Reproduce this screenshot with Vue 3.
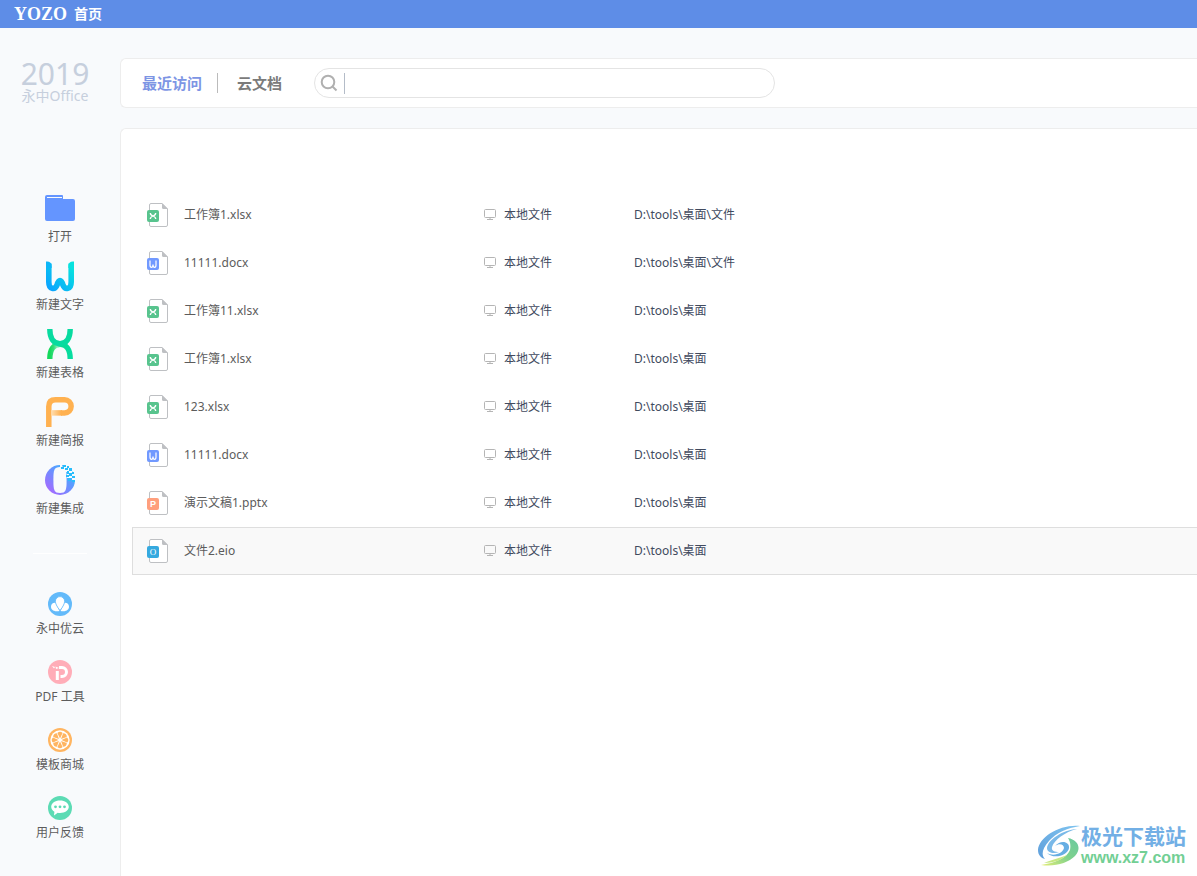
<script setup>
import { ref } from 'vue'

const query = ref('')

const createItems = [
  { id: 'open', label: '打开' },
  { id: 'word', label: '新建文字' },
  { id: 'sheet', label: '新建表格' },
  { id: 'slide', label: '新建简报' },
  { id: 'suite', label: '新建集成' }
]

const serviceItems = [
  { id: 'cloud', label: '永中优云' },
  { id: 'pdf', label: 'PDF 工具' },
  { id: 'store', label: '模板商城' },
  { id: 'feedback', label: '用户反馈' }
]

const files = [
  { name: '工作簿1.xlsx', type: 'x', path: 'D:\\tools\\桌面\\文件' },
  { name: '11111.docx', type: 'w', path: 'D:\\tools\\桌面\\文件' },
  { name: '工作簿11.xlsx', type: 'x', path: 'D:\\tools\\桌面' },
  { name: '工作簿1.xlsx', type: 'x', path: 'D:\\tools\\桌面' },
  { name: '123.xlsx', type: 'x', path: 'D:\\tools\\桌面' },
  { name: '11111.docx', type: 'w', path: 'D:\\tools\\桌面' },
  { name: '演示文稿1.pptx', type: 'p', path: 'D:\\tools\\桌面' },
  { name: '文件2.eio', type: 'o', path: 'D:\\tools\\桌面', active: true }
]

const slices = [0, 45, 90, 135, 180, 225, 270, 315]
</script>

<template>
  <div class="app">
    <header class="topbar">
      <span class="logo">YOZO</span>
      <span class="home">首页</span>
    </header>

    <div class="layout">
      <aside class="sidebar">
        <div class="brand">
          <span class="year">2019</span>
          <span class="product">永中Office</span>
        </div>

        <nav class="group create">
          <button v-for="item in createItems" :key="item.id" type="button" class="item">
            <svg class="big" viewBox="0 0 32 32" aria-hidden="true">
              <template v-if="item.id === 'open'">
                <path d="M3 2h15q1 0 1 1v3h10q2 0 2 2v18q0 2-2 2H3q-2 0-2-2V4q0-2 2-2z" fill="#6495ff" />
                <rect x="3" y="4" width="15" height="1" fill="#f8fafc" />
              </template>
              <template v-else-if="item.id === 'word'">
                <linearGradient id="gw" x1="0" y1="1" x2="1" y2="0">
                  <stop offset="0" stop-color="#0aa4ff" />
                  <stop offset=".5" stop-color="#08c3ef" />
                  <stop offset="1" stop-color="#08e6dc" />
                </linearGradient>
                <path d="M4.8 2.5V21C4.8 28.8 11 29 13 24.2C14.6 18 17.4 18 19 24.2C21 29 27.2 28.8 27.2 21V2.5" fill="none" stroke="url(#gw)" stroke-width="5.6" />
                <path d="M2 3V0.500Q7.600 0 7.600 5V7L2 7z" fill="#0cb6f8" />
                <path d="M30 3V0.500Q24.400 0 24.400 5V7L30 7z" fill="#08e2de" />
              </template>
              <template v-else-if="item.id === 'sheet'">
                <linearGradient id="gx" x1="0" y1="0" x2="1" y2="0">
                  <stop offset="0" stop-color="#14d85b" />
                  <stop offset=".2" stop-color="#34df7c" />
                  <stop offset=".35" stop-color="#84ecb2" />
                  <stop offset=".55" stop-color="#0bd993" />
                  <stop offset="1" stop-color="#07dda0" />
                </linearGradient>
                <path d="M5.8 30C5.8 20 10 15.2 16 15.2C22 15.2 26.2 20 26.2 30" fill="none" stroke="url(#gx)" stroke-width="5.4" />
                <path d="M5.8 0C5.8 10 10 14.6 16 14.6C22 14.6 26.2 10 26.2 0" fill="none" stroke="#08dba0" stroke-width="5.4" />
              </template>
              <template v-else-if="item.id === 'slide'">
                <linearGradient id="gp" gradientUnits="userSpaceOnUse" x1="7" y1="0" x2="17" y2="0">
                  <stop offset="0" stop-color="#ffe0b5" />
                  <stop offset="1" stop-color="#ffb150" />
                </linearGradient>
                <path d="M4.8 30V9.5Q4.8 2.8 11.5 2.8H20.6A6.55 6.55 0 0 1 20.6 15.9H17" fill="none" stroke="#ffb150" stroke-width="5.5" />
                <path d="M7.500 15.900H18" fill="none" stroke="url(#gp)" stroke-width="5.500" />
              </template>
              <template v-else>
                <linearGradient id="go" x1="0" y1="1" x2="1" y2="0">
                  <stop offset="0" stop-color="#b760ff" />
                  <stop offset=".5" stop-color="#6d8eff" />
                  <stop offset="1" stop-color="#24c7ff" />
                </linearGradient>
                <circle cx="16" cy="15" r="15" fill="url(#go)" />
                <path d="M16 2C22 2 22.6 5 22.6 15S22 28 16 28S9.4 25 9.4 15S10 2 16 2z" fill="#f8fafc" />
                <path d="M16 0h2v2h-2zM20 0h12v6h-4v3h3v7h-3v-3h-5V7h-3V2h-2z" fill="#f8fafc" />
                <path d="M19 0h3v2h-3zM17 2h3v2h-3zM23 1h2v2h-2zM21 3h3v2h-3zM25 3h3v3h-3zM23 6h2v3h-2zM28 7h2v2h-2zM25 8h3v3h-3zM22 10h3v2h-3zM28 11h3v2h-3zM24 13h3v3h-3zM28 15h3v2h-3z" fill="#28bdfc" />
              </template>
            </svg>
            <span>{{ item.label }}</span>
          </button>
        </nav>

        <hr class="divider" />

        <nav class="group services">
          <button v-for="item in serviceItems" :key="item.id" type="button" class="item">
            <svg class="small" viewBox="0 0 24 24" aria-hidden="true">
              <template v-if="item.id === 'cloud'">
                <circle cx="12" cy="12" r="12" fill="#63bafa" />
                <path d="M11.500 19C5.500 20.200 3 17.500 3 14.800C3 12 5 10.500 7.500 10.800C9 13.500 10 16.500 11.500 19z" fill="#fff" />
                <path d="M12.500 19C18.500 20.200 21 17.500 21 14.800C21 12 19 10.500 16.500 10.800C15 13.500 14 16.500 12.500 19z" fill="#fff" />
                <path d="M12 18.500C8.500 14 7.400 11.500 7.400 9.200a4.600 4.600 0 0 1 9.200 0c0 2.300-1.100 4.800-4.600 9.300z" fill="#fff" stroke="#63bafa" stroke-width=".8" />
              </template>
              <template v-else-if="item.id === 'pdf'">
                <circle cx="12" cy="12" r="12" fill="#ffadb8" />
                <path d="M9.300 20V11M11 7.500H14a4.500 4.500 0 0 1 0 9h-1.500" fill="none" stroke="#fff" stroke-width="3" />
                <path d="M4 6l3 1-1 1.500zM7.500 6.500L11 8 8 9z" fill="#fff" />
              </template>
              <template v-else-if="item.id === 'store'">
                <circle cx="12" cy="12" r="12" fill="#ffb561" />
                <circle cx="12" cy="12" r="9.700" fill="#fff" />
                <path v-for="a in slices" :key="a" d="M12 10.500L9.400 5Q12 2.400 14.600 5z" fill="#ffb561" :transform="`rotate(${a} 12 12)`" />
              </template>
              <template v-else>
                <circle cx="12" cy="12" r="12" fill="#5cdbb4" />
                <path d="M12 4.500c5 0 8.800 2.700 8.800 6.300S17 17 12 17c-1 0-1.500 0-2.300-.2L6 19.500l.4-3.800C4.400 14.600 3.200 12.900 3.200 10.800c0-3.600 3.800-6.300 8.800-6.300z" fill="#fff" />
                <g fill="#5cdbb4"><circle cx="7.500" cy="10.800" r="1.400" /><circle cx="12" cy="10.800" r="1.400" /><circle cx="16.500" cy="10.800" r="1.400" /></g>
              </template>
            </svg>
            <span>{{ item.label }}</span>
          </button>
        </nav>
      </aside>

      <main class="content">
        <section class="toolbar">
          <button type="button" class="tab current">最近访问</button>
          <span class="bar"></span>
          <button type="button" class="tab">云文档</button>
          <label class="search">
            <svg viewBox="0 0 18 18" aria-hidden="true">
              <circle cx="8" cy="8" r="6.300" />
              <path d="M12.500 12.500L16.500 16.500" />
            </svg>
            <input v-model="query" type="text" aria-label="搜索" />
          </label>
        </section>

        <section class="panel">
          <table class="files">
            <tbody>
              <tr v-for="(file, i) in files" :key="i" :class="{ active: file.active }">
                <td class="kind">
                  <svg class="doc" viewBox="0 0 22 24" aria-hidden="true">
                    <path d="M15 .5H4Q2.500.5 2.500 2V22Q2.500 23.500 4 23.500H19Q20.500 23.500 20.500 22V6z" fill="#fff" stroke="#bec0c3" />
                    <path d="M15 0v4.500Q15 6 16.500 6H21z" fill="#bec0c3" />
                    <template v-if="file.type === 'x'">
                      <rect y="7" width="12" height="12" rx="2" fill="#58c48e" />
                      <path d="M3.300 10C3.300 14 8.700 12 8.700 16M8.700 10C8.700 14 3.300 12 3.300 16" fill="none" stroke="#fff" stroke-width="1.300" />
                    </template>
                    <template v-else-if="file.type === 'w'">
                      <rect y="7" width="12" height="12" rx="2" fill="#7199ff" />
                      <path d="M3 9.500V14Q3 16.300 4.500 16.300T6 13.500Q6 16.300 7.500 16.300T9 14V9.500" fill="none" stroke="#fff" stroke-width="1.200" />
                    </template>
                    <template v-else-if="file.type === 'p'">
                      <rect y="7" width="12" height="12" rx="2" fill="#ff9f7d" />
                      <text x="6" y="16" class="mark">P</text>
                    </template>
                    <template v-else>
                      <rect y="7" width="12" height="12" rx="2" fill="#35a9df" />
                      <text x="6" y="16" class="mark serif">O</text>
                    </template>
                  </svg>
                </td>
                <td class="name">{{ file.name }}</td>
                <td class="place">
                  <span class="place-in">
                    <svg viewBox="0 0 12 12" aria-hidden="true">
                      <rect x=".5" y=".5" width="11" height="8" rx="1" />
                      <path d="M6 8.500V10M3 10.500H9" />
                    </svg>
                    本地文件
                  </span>
                </td>
                <td class="path">{{ file.path }}</td>
              </tr>
            </tbody>
          </table>
        </section>
      </main>
    </div>

    <div class="watermark">
      <svg viewBox="0 0 44 42" aria-hidden="true">
        <linearGradient id="s1" x1="1" y1="0" x2="0" y2="1">
          <stop offset="0" stop-color="#7fc4f0" />
          <stop offset="1" stop-color="#5f9fdb" />
        </linearGradient>
        <linearGradient id="s2" x1="1" y1="0" x2="0" y2="1">
          <stop offset="0" stop-color="#69c9a0" />
          <stop offset=".5" stop-color="#7fd28c" />
          <stop offset="1" stop-color="#e5ed75" />
        </linearGradient>
        <path d="M43 1C23-1 2 12 1 25c0 5 3 8 7 9-4-4-3-10 4-18C19 8 30 3 43 1z" fill="url(#s1)" />
        <path d="M40 4C25 5 11 15 10 23c0 5 7 6 12 4-4 0-8-1-7-5 2-7 13-15 25-18z" fill="#7ab9e8" />
        <path d="M10 28c7 4 16 0 17-5 0-4-5-5-9-2 6-7 15-4 14 2C31 30 17 35 10 28z" fill="#66aee3" />
        <path d="M31 13c10 2 14 10 7 18C31 38 18 42 4 40c14-2 26-7 29-15 1-5 0-9-2-12z" fill="url(#s2)" />
        <path d="M7 38c9 0 18-3 23-8-6 3-17 5-23 8z" fill="#c6e782" />
      </svg>
      <div class="site">
        <span class="site-name">极光下载站</span>
        <span class="site-url">www.xz7.com</span>
      </div>
    </div>
  </div>
</template>

<style>
body {
  background: #f8fafc;
}
</style>

<style scoped>
.app {
  display: flex;
  flex-direction: column;
  min-height: 100vh;
  position: relative;
  overflow: hidden;
  font: 12px/16px "Noto Sans", "Noto Sans CJK SC", sans-serif;
  color: #5c5c5c;
}
button {
  border: 0;
  padding: 0;
  background: none;
  font: inherit;
  color: inherit;
  cursor: pointer;
}
svg {
  display: block;
  flex: none;
}
.topbar {
  display: flex;
  align-items: center;
  gap: 7px;
  height: 28px;
  padding-left: 14px;
  background: #5e8de7;
  color: #fff;
}
.logo {
  font: bold 18px/28px "Liberation Serif", serif;
}
.home {
  font-size: 14px;
  font-weight: bold;
}
.layout {
  flex: 1;
  display: grid;
  grid-template-columns: 120px 1fr;
}
.sidebar {
  display: flex;
  flex-direction: column;
  align-items: center;
}
.brand {
  display: flex;
  flex-direction: column;
  align-items: center;
  padding-right: 10px;
  margin-top: 32px;
  color: #c6cfdd;
}
.year {
  font-size: 30px;
  line-height: 28px;
}
.product {
  font-size: 14px;
  line-height: 16px;
}
.group {
  display: flex;
  flex-direction: column;
}
.create {
  margin-top: 89px;
  gap: 16px;
}
.services {
  margin-top: 38px;
  gap: 23px;
}
.item {
  display: flex;
  flex-direction: column;
  align-items: center;
  gap: 4px;
}
.services .item {
  gap: 5px;
}
.big {
  width: 32px;
  height: 32px;
}
.small {
  width: 24px;
  height: 24px;
}
.divider {
  width: 54px;
  height: 1px;
  margin: 36px 0 0;
  border: 0;
  background: #fff;
}
.content {
  display: flex;
  flex-direction: column;
  gap: 20px;
  padding-top: 30px;
}
.toolbar,
.panel {
  background: #fff;
  border: 1px solid #ededed;
  border-right: 0;
}
.toolbar {
  display: flex;
  align-items: center;
  box-sizing: border-box;
  height: 50px;
  padding: 0 21px;
  border-radius: 6px 0 0 6px;
}
.tab {
  font-size: 15px;
  line-height: 20px;
  font-weight: bold;
  color: #7b7b7b;
}
.tab.current {
  color: #7d95e4;
}
.bar {
  width: 1px;
  height: 20px;
  margin: 0 19px 0 15px;
  background: #bbb;
}
.search {
  display: flex;
  align-items: center;
  gap: 6px;
  box-sizing: border-box;
  flex: 0 1 461px;
  height: 30px;
  margin-left: 32px;
  padding: 0 16px 0 5px;
  border: 1px solid #e4e4e4;
  border-radius: 15px;
}
.search svg {
  width: 18px;
  height: 18px;
  fill: none;
  stroke: #b0b0b0;
  stroke-width: 2;
}
.search input {
  flex: 1;
  min-width: 0;
  height: 21px;
  box-sizing: border-box;
  padding: 0 8px;
  border: 0;
  border-left: 1px solid #b4bcc8;
  outline: 0;
  background: none;
  font: inherit;
}
.panel {
  flex: 1;
  padding: 62px 0 0 11px;
  border-bottom: 0;
  border-radius: 6px 0 0 0;
}
.files {
  width: 100%;
  table-layout: fixed;
  border-spacing: 0;
}
.files td {
  box-sizing: border-box;
  height: 48px;
  padding: 0;
  border: solid transparent;
  border-width: 1px 0;
  vertical-align: middle;
}
.files .kind {
  width: 52px;
  border-left-width: 1px;
  padding-left: 14px;
}
.files .name {
  width: 300px;
}
.files .place {
  width: 150px;
}
.files .place,
.files .path {
  color: #414a5e;
}
.files .active td {
  background: #f9f9f9;
  border-color: #dedede;
}
.doc {
  width: 22px;
  height: 24px;
}
.mark {
  fill: #fff;
  font: bold 9px "Liberation Sans", sans-serif;
  text-anchor: middle;
}
.mark.serif {
  font: 9px "Liberation Serif", serif;
}
.place-in {
  display: flex;
  align-items: center;
  gap: 8px;
}
.place-in svg {
  width: 12px;
  height: 12px;
  fill: none;
  stroke: #b5b5b5;
}
.watermark {
  position: absolute;
  right: 11px;
  bottom: 8px;
  display: flex;
  align-items: center;
}
.watermark svg {
  width: 44px;
  height: 42px;
}
.site {
  display: flex;
  flex-direction: column;
}
.site-name {
  font-size: 21px;
  line-height: 24px;
  font-weight: bold;
  color: #72afe5;
}
.site-url {
  font: bold 16px/20px "Liberation Sans", sans-serif;
  color: #72cf94;
}
</style>
